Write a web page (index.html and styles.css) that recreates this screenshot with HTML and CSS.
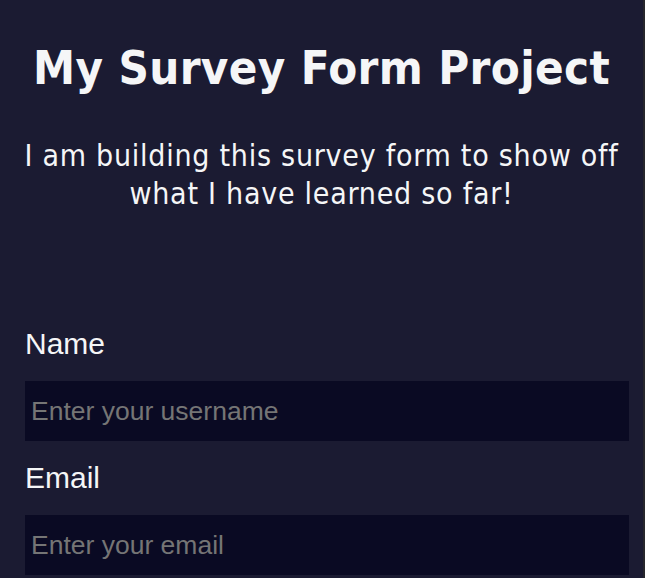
FILE: index.html
```html
<!DOCTYPE html>
<html lang="en">
<head>
<meta charset="utf-8">
<title>Survey Form</title>
<link rel="stylesheet" href="styles.css">
</head>
<body>
<div class="page">
  <h1 class="title">My Survey Form Project</h1>
  <p class="intro">I am building this survey form to show off what I have learned so far!</p>
  <form class="form">
    <label class="label" for="name">Name</label>
    <input class="field" id="name" type="text" placeholder="Enter your username">
    <label class="label" for="email">Email</label>
    <input class="field" id="email" type="email" placeholder="Enter your email">
  </form>
</div>
</body>
</html>
```

FILE: styles.css
```css
html, body {
  margin: 0;
  padding: 0;
  background: #1b1b32;
}
body {
  height: 578px;
  overflow: hidden;
}
.page {
  border-right: 2px solid #26262c;
  min-height: 578px;
  box-sizing: border-box;
  color: #f5f6f7;
}
.title {
  margin: 0;
  padding-top: 38px;
  text-align: center;
  font-family: "DejaVu Sans Condensed", "DejaVu Sans", sans-serif;
  font-stretch: condensed;
  font-weight: bold;
  font-size: 47px;
  letter-spacing: 0.35px;
  line-height: 60px;
}
.intro {
  margin: 0;
  padding: 0 10px;
  margin-top: 39px;
  text-align: center;
  font-family: "DejaVu Sans Condensed", "DejaVu Sans", sans-serif;
  font-stretch: condensed;
  font-size: 30px;
  letter-spacing: 0.75px;
  line-height: 38px;
}
.form {
  display: flex;
  flex-direction: column;
  padding: 0 14px 0 25px;
  margin-top: 114px;
}
.label {
  font-family: "Liberation Sans", Arial, sans-serif;
  font-size: 30px;
  line-height: 34px;
}
.field {
  margin: 20px 0 20px;
  height: 60px;
  box-sizing: border-box;
  border: none;
  outline: none;
  background: #0a0a23;
  color: #f5f6f7;
  padding: 0 6px;
  font-family: "Liberation Sans", Arial, sans-serif;
  font-size: 26.5px;
}
.field::placeholder {
  color: #757575;
}
```
